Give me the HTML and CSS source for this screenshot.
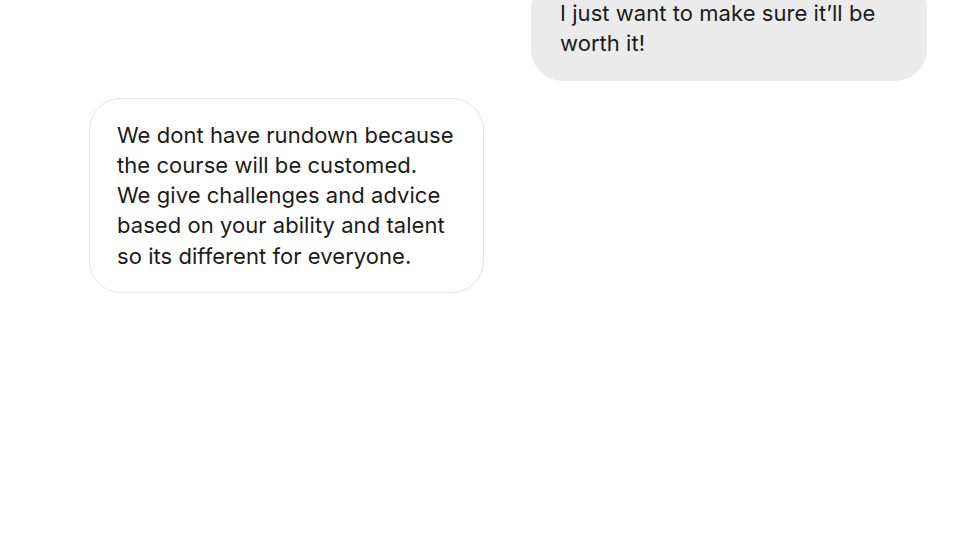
FILE: index.html
```html
<!DOCTYPE html>
<html>
<head>
<meta charset="utf-8">
<link rel="stylesheet" href="styles.css">
</head>
<body>
<main class="thread">
  <div class="msg msg-out">
    <p class="bubble bubble-out">I just want to make sure it’ll be<br>worth it!</p>
  </div>
  <div class="msg msg-in">
    <p class="bubble bubble-in">We dont have rundown because<br>the course will be customed.<br>We give challenges and advice<br>based on your ability and talent<br>so its different for everyone.</p>
  </div>
</main>
</body>
</html>
```
FILE: styles.css
```css
html, body {
  margin: 0;
  padding: 0;
  background: #ffffff;
}
body {
  width: 960px;
  height: 540px;
  overflow: hidden;
  font-family: Inter, "Liberation Sans", Arial, sans-serif;
}
.thread {
  display: flex;
  flex-direction: column;
  gap: 17px;
  margin-top: -23px;
  padding: 0 33px 0 89px;
}
.msg {
  display: flex;
}
.msg-out {
  justify-content: flex-end;
}
.msg-in {
  justify-content: flex-start;
}
.bubble {
  margin: 0;
  font-size: 22px;
  letter-spacing: 0.05px;
  line-height: 30.3px;
  color: #1b1b1b;
  white-space: nowrap;
}
.bubble-out {
  width: 396px;
  box-sizing: border-box;
  padding: 21px 28px 22px 29px;
  background: #ebebeb;
  border-radius: 32px;
}
.bubble-in {
  width: 395px;
  box-sizing: border-box;
  padding: 21px 26px 21px 27px;
  background: #ffffff;
  border: 1.5px solid #e6e6e6;
  border-radius: 32px;
}
```
